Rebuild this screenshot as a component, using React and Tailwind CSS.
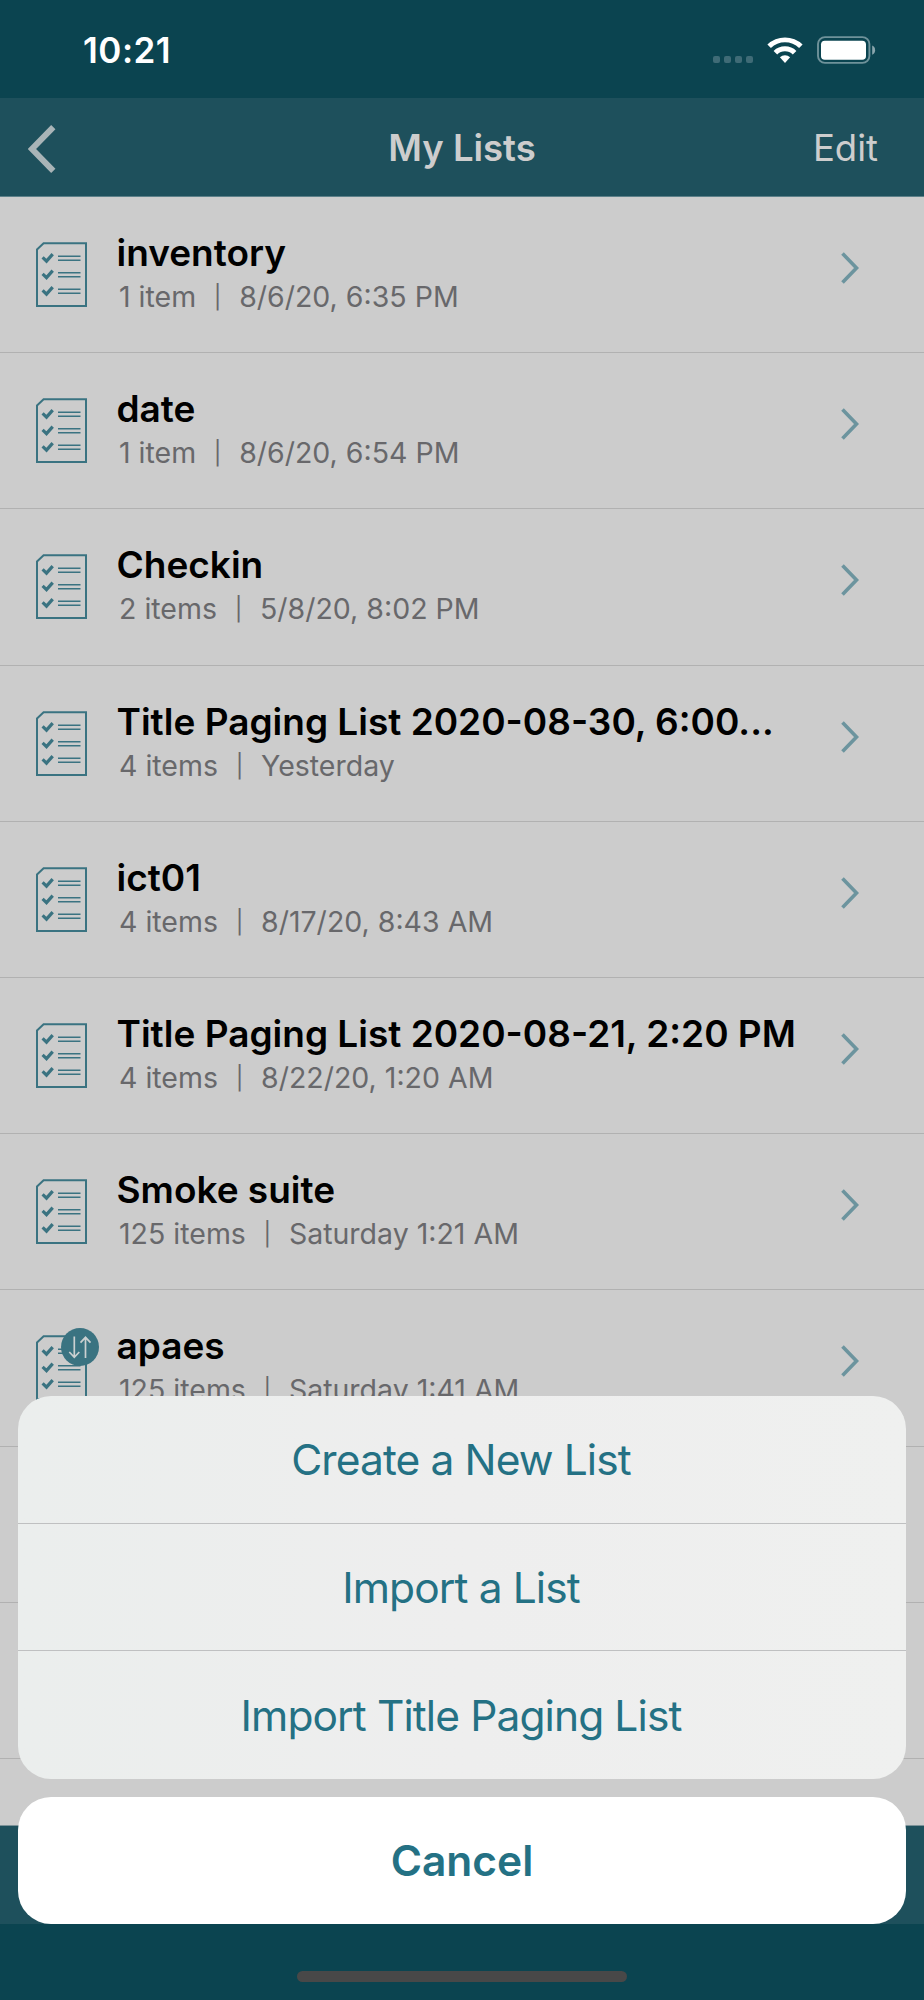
import React from 'react';

const LISTS = [
  { name: 'inventory', count: '1 item', date: '8/6/20, 6:35 PM' },
  { name: 'date', count: '1 item', date: '8/6/20, 6:54 PM' },
  { name: 'Checkin', count: '2 items', date: '5/8/20, 8:02 PM' },
  { name: 'Title Paging List 2020-08-30, 6:00...', count: '4 items', date: 'Yesterday' },
  { name: 'ict01', count: '4 items', date: '8/17/20, 8:43 AM' },
  { name: 'Title Paging List 2020-08-21, 2:20 PM', count: '4 items', date: '8/22/20, 1:20 AM' },
  { name: 'Smoke suite', count: '125 items', date: 'Saturday 1:21 AM' },
  { name: 'apaes', count: '125 items', date: 'Saturday 1:41 AM', syncing: true },
];

const ACTIONS = ['Create a New List', 'Import a List', 'Import Title Paging List'];

function StatusBar() {
  return (
    <div className="h-[98px] bg-[#0b4450] flex items-start justify-between pl-[83px] pr-[47px] text-white">
      <span className="mt-[28px] text-[35px] leading-[44px] font-semibold tracking-[0.5px]">10:21</span>
      <div className="mt-[36px] flex items-start">
        <div className="flex gap-[4px] mt-[20px] mr-[14px]">
          <i className="w-[7px] h-[7px] rounded-[2px] bg-[#3f6b76]" />
          <i className="w-[7px] h-[7px] rounded-[2px] bg-[#3f6b76]" />
          <i className="w-[7px] h-[7px] rounded-[2px] bg-[#3f6b76]" />
          <i className="w-[7px] h-[7px] rounded-[2px] bg-[#3f6b76]" />
        </div>
        <svg width="36" height="28" viewBox="0 0 36 28" fill="#fff" className="mr-[14px]">
          <path d="M0.4 8.6a25.1 25.1 0 0 1 35.2 0L32.1 12.1a20.2 20.2 0 0 0-28.2 0z" />
          <path d="M6.6 15a16.3 16.3 0 0 1 22.8 0L25.8 18.5a11.2 11.2 0 0 0-15.6 0z" />
          <path d="M12.9 21.3a7.3 7.3 0 0 1 10.2 0L18 27z" />
        </svg>
        <svg width="60" height="28" viewBox="0 0 60 28">
          <rect x="1" y="1.1" width="51.4" height="25.8" rx="7" fill="none" stroke="#6f929a" strokeWidth="1.9" />
          <rect x="4" y="4.8" width="45" height="19" rx="3.8" fill="#fff" />
          <path d="M55.2 9.6c1.9.9 2.9 2.5 2.9 4.6s-1 3.7-2.9 4.6z" fill="#8aa6ad" />
        </svg>
      </div>
    </div>
  );
}

function NavBar() {
  return (
    <div className="h-[99px] bg-[#1e505c] border-b border-[#5c8089] grid grid-cols-3 items-start px-[28px] text-[#cdcdcd] text-[36.5px] leading-[44px]">
      <svg width="28" height="48" viewBox="0 0 28 48" className="mt-[27px]">
        <path d="M25.3 2.2L4 24l21.3 21.8" fill="none" stroke="#a9b4b7" strokeWidth="6" />
      </svg>
      <span className="mt-[28px] text-center font-semibold">My Lists</span>
      <span className="mt-[28px] pr-[18px] text-right">Edit</span>
    </div>
  );
}

function ListIcon() {
  return (
    <svg width="52" height="66" viewBox="0 0 52 66" fill="none" stroke="#3a7381">
      <path d="M1 7.5L7.6 1.2H50V64H1z" strokeWidth="2" />
      {[0, 16.5, 33].map((y) => (
        <g key={y} transform={`translate(0 ${y})`}>
          <path d="M6.6 15.4l3.9 3.7 6.2-7" strokeWidth="3.2" />
          <path d="M22 14.3H44.5M22 18.2H44.5" strokeWidth="1.5" />
        </g>
      ))}
    </svg>
  );
}

function SyncBadge() {
  return (
    <svg width="38" height="38" viewBox="0 0 38 38" className="absolute left-[24.5px] -top-[7px]">
      <circle cx="19" cy="19" r="19" fill="#3a7381" />
      <path
        d="M13.3 8.5V29M8.3 24l5 5.3 5-5.3M24.5 30V9.7M19.5 14.6l5-5.3 5 5.3"
        fill="none"
        stroke="#cbd0d1"
        strokeWidth="1.7"
      />
    </svg>
  );
}

function ListRow({ item }) {
  return (
    <div className="h-[156.2px] shrink-0 border-b border-[#b1b1b1] flex items-start pl-[36px] pr-[64px]">
      {item && (
        <>
          <div className="relative mt-[45px] shrink-0">
            <ListIcon />
            {item.syncing && <SyncBadge />}
          </div>
          <div className="ml-[28.5px] mt-[34px] flex-1 whitespace-nowrap">
            <div className="text-[37px] leading-[44px] font-semibold text-black">{item.name}</div>
            <div className="mt-[5px] ml-[2.5px] flex text-[28.5px] leading-[34px] text-[#68686b]">
              <span>{item.count}</span>
              <span className="w-[43px] text-center text-[23px]">|</span>
              <span>{item.date}</span>
            </div>
          </div>
          <svg width="20" height="32" viewBox="0 0 20 32" className="mt-[55px] shrink-0">
            <path d="M2.5 1.5L16.500 16 2.5 30.5" fill="none" stroke="#6c949e" strokeWidth="3.6" />
          </svg>
        </>
      )}
    </div>
  );
}

function ActionSheet() {
  return (
    <div className="absolute left-[18px] right-[18px] top-[1396px] flex flex-col gap-[18px] text-[42.5px] text-[#247184]">
      <div className="h-[383px] rounded-[33px] overflow-hidden bg-linear-to-r from-[#ebeeed] via-[#eeeeee] to-[#eff0ef] grid grid-rows-3 divide-y divide-[#bfc0c1]">
        {ACTIONS.map((label) => (
          <button key={label} className="flex items-center justify-center pt-[2px] pr-[2px] tracking-[-0.9px]">
            {label}
          </button>
        ))}
      </div>
      <button className="h-[127px] rounded-[33px] bg-white font-semibold">Cancel</button>
    </div>
  );
}

export default function App() {
  return (
    <div className="relative w-[924px] h-[2000px] overflow-hidden flex flex-col bg-[#cccccc] font-['Inter',sans-serif]">
      <StatusBar />
      <NavBar />
      <div className="h-[1628px] overflow-hidden flex flex-col">
        {LISTS.map((item) => (
          <ListRow key={item.name} item={item} />
        ))}
        <ListRow />
        <ListRow />
      </div>
      <div className="h-[99px] bg-[#1e505c] border-t border-[#7d9298]" />
      <div className="flex-1 bg-[#0b4450] flex justify-center items-start">
        <div className="mt-[47px] w-[330px] h-[11px] rounded-full bg-[#484848]" />
      </div>
      <ActionSheet />
    </div>
  );
}
